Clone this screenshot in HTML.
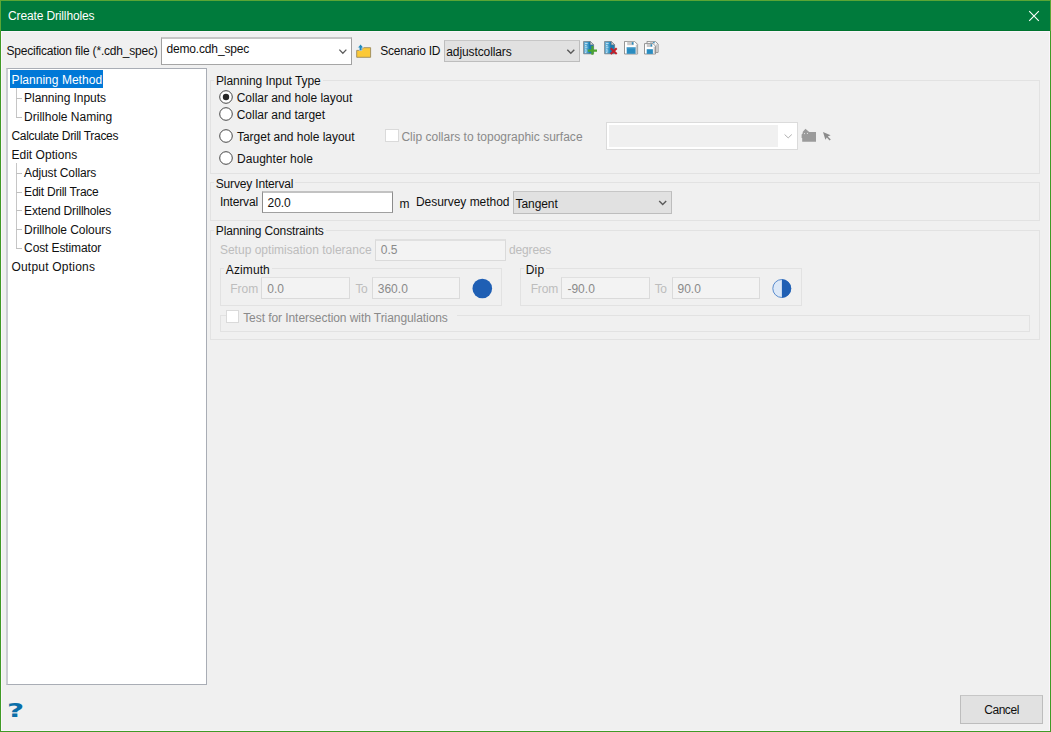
<!DOCTYPE html>
<html><head><meta charset="utf-8"><title>Create Drillholes</title>
<style>
html,body{margin:0;padding:0}
body{width:1051px;height:732px;overflow:hidden;position:relative;background:#f0f0f0;font-family:'Liberation Sans', sans-serif;font-size:12px}
.b{position:absolute;display:block}
.q{position:absolute;white-space:pre}
.t{position:absolute;white-space:pre;font-family:'Liberation Sans', sans-serif;font-size:12px;line-height:14px}
</style></head><body>
<div class="b" style="left:0px;top:0px;width:1051px;height:732px;background:#409a26"></div>
<div class="b" style="left:0px;top:0px;width:1051px;height:31px;background:#5aa635"></div>
<div class="b" style="left:1px;top:1px;width:1049px;height:30px;background:#007b3c"></div>
<div class="b" style="left:1px;top:30px;width:1049px;height:1px;background:#00742f"></div>
<div class="b" style="left:1px;top:31px;width:1049px;height:700px;background:#fbf5fb"></div>
<div class="b" style="left:2px;top:32px;width:1047px;height:698px;background:#f0f0f0"></div>
<svg class="b" style="left:1027px;top:9px" width="14" height="14" viewBox="0 0 14 14"><path d="M2.2 2.2 L11.8 11.8 M11.8 2.2 L2.2 11.8" stroke="#fff" stroke-width="1.1" fill="none"/></svg>
<div class="b" style="left:161px;top:37px;width:191px;height:28px;background:#fff;border:1px solid #a0a0a0;border-top:2px solid #c6c6c6;border-bottom-color:#a6a6a6;box-sizing:border-box"></div>
<svg class="b" style="left:337px;top:47px" width="12" height="10" viewBox="0 0 12 10"><path d="M2.35 2.6 L5.85 6.2 L9.35 2.6" stroke="#5c5c5c" stroke-width="1.3" fill="none"/></svg>
<svg class="b" style="left:355px;top:43px" width="17" height="16" viewBox="0 0 17 16">
<path d="M1.7 7.4 L6.6 7.4 L8.2 4.7 L15.6 4.7 L15.6 14.3 L1.7 14.3 Z" fill="#fcc937" stroke="#9a8a5c" stroke-width="0.9" stroke-linejoin="round"/>
<path d="M5.6 1.3 L8.5 4.7 L6.9 4.7 L6.9 7.6 L4.3 7.6 L4.3 4.7 L2.7 4.7 Z" fill="#1e88bb" stroke="#f4f4f4" stroke-width="0.5"/>
</svg>
<div class="b" style="left:444px;top:40px;width:136px;height:22px;background:#e1e1e1;border:1px solid #bdbdbd;border-top-color:#c6c6c6;box-sizing:border-box"></div>
<svg class="b" style="left:565px;top:47px" width="12" height="10" viewBox="0 0 12 10"><path d="M2.3 2.7 L5.8 6.3 L9.3 2.7" stroke="#5a5a5a" stroke-width="1.4" fill="none"/></svg>
<svg class="b" style="left:583px;top:41px" width="15" height="15" viewBox="0 0 15 15"><defs><linearGradient id="dg1" x1="0" x2="1" y1="0" y2="0"><stop offset="0" stop-color="#6cb4da"/><stop offset="0.45" stop-color="#3c98c8"/><stop offset="0.6" stop-color="#1b7bb0"/><stop offset="1" stop-color="#1b7bb0"/></linearGradient></defs>
<path d="M0.6 0.4 L7.4 0.4 L10.6 3.8 L10.6 12.8 L0.6 12.8 Z" fill="url(#dg1)" stroke="#6a7076" stroke-width="0.7"/>
<path d="M7.4 0.6 L7.4 3.8 L10.4 3.8 Z" fill="#e4e4e4" stroke="#777" stroke-width="0.5"/>
<path d="M2 2.4h2.6M2 4.4h1.6M2 6.2h2.4M2 8.2h1.6M2 10h2.2M2 11.6h1.4" stroke="#d4eaf6" stroke-width="0.9"/>

<path d="M9.4 5 V13.8 M4.9 9.6 H14" stroke="#4ca52e" stroke-width="2.1"/>
</svg>
<svg class="b" style="left:604px;top:41px" width="15" height="15" viewBox="0 0 15 15"><defs><linearGradient id="dg2" x1="0" x2="1" y1="0" y2="0"><stop offset="0" stop-color="#6cb4da"/><stop offset="0.45" stop-color="#3c98c8"/><stop offset="0.6" stop-color="#1b7bb0"/><stop offset="1" stop-color="#1b7bb0"/></linearGradient></defs>
<path d="M0.6 0.4 L7.4 0.4 L10.6 3.8 L10.6 12.8 L0.6 12.8 Z" fill="url(#dg2)" stroke="#6a7076" stroke-width="0.7"/>
<path d="M7.4 0.6 L7.4 3.8 L10.4 3.8 Z" fill="#e4e4e4" stroke="#777" stroke-width="0.5"/>
<path d="M2 2.4h2.6M2 4.4h1.6M2 6.2h2.4M2 8.2h1.6M2 10h2.2M2 11.6h1.4" stroke="#d4eaf6" stroke-width="0.9"/>

<path d="M6.7 7.2 L12.7 13 M12.7 7.2 L6.7 13" stroke="#c2202a" stroke-width="2"/>
</svg>
<svg class="b" style="left:624px;top:41px" width="15" height="15" viewBox="0 0 15 15">
<path d="M0.5 0.4 L10.6 0.4 L13.6 3.4 L13.6 13 L0.5 13 Z" fill="#fff" stroke="#8a8a8a" stroke-width="0.9"/>
<rect x="3.2" y="0.8" width="6.6" height="3.4" fill="#c9c9c9"/><rect x="7.8" y="1.2" width="1.6" height="2.4" fill="#2a8cc0"/>
<rect x="2.7" y="6.4" width="9" height="6.4" fill="#2a8cc0"/><rect x="2.7" y="6.4" width="9" height="1" fill="#55a6d0"/>
<rect x="11.8" y="3.6" width="1.5" height="9.2" fill="#c8c8c8"/>
</svg>
<svg class="b" style="left:644px;top:41px" width="16" height="15" viewBox="0 0 16 15">
<path d="M3 0.4 L11.4 0.4 L14.1 3 L14.1 11.4 L3 11.4 Z" fill="#f4f4f4" stroke="#8a8a8a" stroke-width="0.9"/>
<rect x="6" y="0.8" width="4.6" height="1.6" fill="#c9c9c9"/><rect x="9.2" y="0.9" width="1.3" height="1.4" fill="#2a8cc0"/>
<rect x="12" y="3.4" width="1.6" height="7.6" fill="#c8c8c8"/>
<path d="M0.5 2.6 L9 2.6 L11.5 5.1 L11.5 13 L0.5 13 Z" fill="#fff" stroke="#8a8a8a" stroke-width="0.9"/>
<rect x="2.8" y="3" width="5.6" height="3" fill="#c9c9c9"/><rect x="6.6" y="3.3" width="1.5" height="2.2" fill="#2a8cc0"/>
<rect x="2.7" y="8.2" width="6.2" height="4.7" fill="#2a8cc0"/>
<rect x="9.6" y="5.6" width="1.4" height="7" fill="#c8c8c8"/>
</svg>
<div class="b" style="left:6px;top:68px;width:201px;height:617px;background:#fff;border:1px solid #a9adb5;border-left:2px solid #cbcdd2;box-sizing:border-box"></div>
<div class="b" style="left:10px;top:70px;width:93px;height:18px;background:#0078d7"></div>
<div class="b" style="left:16px;top:88px;width:1px;height:29px;background:#c6c6c6"></div>
<div class="b" style="left:16px;top:98px;width:6px;height:1px;background:#c0c0c0"></div>
<div class="b" style="left:16px;top:117px;width:6px;height:1px;background:#c0c0c0"></div>
<div class="b" style="left:16px;top:163px;width:1px;height:85px;background:#c6c6c6"></div>
<div class="b" style="left:16px;top:173px;width:6px;height:1px;background:#c0c0c0"></div>
<div class="b" style="left:16px;top:192px;width:6px;height:1px;background:#c0c0c0"></div>
<div class="b" style="left:16px;top:210px;width:6px;height:1px;background:#c0c0c0"></div>
<div class="b" style="left:16px;top:229px;width:6px;height:1px;background:#c0c0c0"></div>
<div class="b" style="left:16px;top:248px;width:6px;height:1px;background:#c0c0c0"></div>
<div class="b" style="left:210px;top:80px;width:830px;height:94px;border:1px solid #e2e2e2;box-sizing:border-box"></div><div class="b" style="left:214px;top:80px;width:109px;height:1px;background:#f0f0f0"></div>
<div class="b" style="left:210px;top:182px;width:830px;height:39px;border:1px solid #e2e2e2;box-sizing:border-box"></div><div class="b" style="left:214px;top:182px;width:81px;height:1px;background:#f0f0f0"></div>
<div class="b" style="left:210px;top:230px;width:830px;height:110px;border:1px solid #e2e2e2;box-sizing:border-box"></div><div class="b" style="left:214px;top:230px;width:112px;height:1px;background:#f0f0f0"></div>
<div class="b" style="left:220px;top:268px;width:282px;height:38px;border:1px solid #e2e2e2;box-sizing:border-box"></div><div class="b" style="left:224px;top:268px;width:48px;height:1px;background:#f0f0f0"></div>
<div class="b" style="left:520px;top:268px;width:282px;height:38px;border:1px solid #e2e2e2;box-sizing:border-box"></div><div class="b" style="left:524px;top:268px;width:22px;height:1px;background:#f0f0f0"></div>
<div class="b" style="left:220px;top:315px;width:810px;height:17px;border:1px solid #e2e2e2;box-sizing:border-box"></div><div class="b" style="left:226px;top:315px;width:231px;height:1px;background:#f0f0f0"></div>
<svg class="b" style="left:218.25px;top:89.3px" width="16" height="16" viewBox="0 0 16 16"><circle cx="8" cy="8" r="6.3" fill="#fff" stroke="#333" stroke-width="0.9"/><circle cx="8" cy="8" r="3.2" fill="#262626"/></svg>
<svg class="b" style="left:218.25px;top:106.0px" width="16" height="16" viewBox="0 0 16 16"><circle cx="8" cy="8" r="6.3" fill="#fff" stroke="#333" stroke-width="0.9"/></svg>
<svg class="b" style="left:218.25px;top:128.0px" width="16" height="16" viewBox="0 0 16 16"><circle cx="8" cy="8" r="6.3" fill="#fff" stroke="#333" stroke-width="0.9"/></svg>
<svg class="b" style="left:218.25px;top:149.8px" width="16" height="16" viewBox="0 0 16 16"><circle cx="8" cy="8" r="6.3" fill="#fff" stroke="#333" stroke-width="0.9"/></svg>
<div class="b" style="left:385px;top:129px;width:14px;height:13px;background:#fff;border:1px solid #dadada;box-sizing:border-box"></div>
<div class="b" style="left:226px;top:310px;width:13px;height:13px;background:#fff;border:1px solid #dadada;box-sizing:border-box"></div>
<div class="b" style="left:606px;top:122px;width:192px;height:28px;background:#fff;border:1px solid #dbdbdb;box-sizing:border-box"></div>
<div class="b" style="left:609px;top:125px;width:169px;height:22px;background:#f0f0f0"></div>
<svg class="b" style="left:782px;top:131px" width="12" height="10" viewBox="0 0 12 10"><path d="M2.6 3.5 L6.2 6.9 L9.8 3.5" stroke="#b0b0b0" stroke-width="1" fill="none"/></svg>
<svg class="b" style="left:801px;top:128px" width="17" height="16" viewBox="0 0 17 16">
<path d="M0.6 6.6 L1.6 5.4 L1.8 3.8 L4.5 0.7 L7.6 3.6 L8.4 4.1 L15 4.1 L15 13.7 L1.2 13.7 L1.2 10 L0.6 10 Z" fill="#9b9b9b"/><circle cx="3.5" cy="5.6" r="0.55" fill="#e4e4e4"/><circle cx="6.4" cy="5.4" r="0.55" fill="#e4e4e4"/></svg>
<svg class="b" style="left:822px;top:130.5px" width="11" height="11" viewBox="0 0 11 11">
<path d="M1 1 L8.6 4.2 L5.8 5.4 L8.8 8.6 L7.6 9.6 L4.8 6.4 L3.4 8.8 Z" fill="#8c8c8c"/></svg>
<div class="b" style="left:262px;top:191px;width:131px;height:22px;background:#fff;border:1px solid #8c8c8c;border-top:2px solid #c2c2c2;border-bottom-color:#a0a0a0;box-sizing:border-box"></div>
<div class="b" style="left:513px;top:191px;width:159px;height:23px;background:#e1e1e1;border:1px solid #bdbdbd;border-top-color:#c6c6c6;box-sizing:border-box"></div>
<svg class="b" style="left:657px;top:198px" width="12" height="10" viewBox="0 0 12 10"><path d="M2.2 3 L5.7 6.6 L9.2 3" stroke="#5a5a5a" stroke-width="1.4" fill="none"/></svg>
<div class="b" style="left:375px;top:239px;width:131px;height:22px;background:#f3f3f3;border:1px solid #dadada;border-top-color:#e0e0e0;box-sizing:border-box;border-top-width:2px"></div>
<div class="b" style="left:261px;top:277px;width:89px;height:22px;background:#f3f3f3;border:1px solid #dadada;border-top-color:#e0e0e0;box-sizing:border-box"></div>
<div class="b" style="left:372px;top:277px;width:88px;height:22px;background:#f3f3f3;border:1px solid #dadada;border-top-color:#e0e0e0;box-sizing:border-box"></div>
<div class="b" style="left:561px;top:277px;width:89px;height:22px;background:#f3f3f3;border:1px solid #dadada;border-top-color:#e0e0e0;box-sizing:border-box"></div>
<div class="b" style="left:672px;top:277px;width:88px;height:22px;background:#f3f3f3;border:1px solid #dadada;border-top-color:#e0e0e0;box-sizing:border-box"></div>
<svg class="b" style="left:471px;top:277px" width="23" height="23" viewBox="0 0 23 23"><circle cx="11.3" cy="11.5" r="9.8" fill="#1f5fb4"/></svg>
<svg class="b" style="left:771px;top:277px" width="23" height="23" viewBox="0 0 23 23"><circle cx="10.8" cy="11.5" r="9" fill="#dce8f7" stroke="#4a80c8" stroke-width="0.9"/><path d="M10.9 2.2 A9.3 9.3 0 0 1 10.9 20.8 Z" fill="#2060b4"/></svg>
<div class="b" style="left:960px;top:695px;width:83px;height:29px;background:#e1e1e1;border:1px solid #bdbdbd;border-top-color:#c6c6c6;box-sizing:border-box"></div>
<span class="q" style="left:7px;top:696px;color:#0a6ea8;font-family:'DejaVu Sans',sans-serif;font-size:20px;font-weight:bold;line-height:28px;transform-origin:0 0;transform:scaleX(1.48)">?</span>
<span class="t" style="left:8.0px;top:9px;color:#ffffff;letter-spacing:-0.135px">Create Drillholes</span>
<span class="t" style="left:6.4px;top:44px;color:#101010;letter-spacing:-0.201px">Specification file (*.cdh_spec)</span>
<span class="t" style="left:166.4px;top:42px;color:#101010;letter-spacing:-0.149px">demo.cdh_spec</span>
<span class="t" style="left:380.3px;top:44px;color:#101010;letter-spacing:-0.246px">Scenario ID</span>
<span class="t" style="left:446.3px;top:45px;color:#101010;letter-spacing:-0.108px">adjustcollars</span>
<span class="t" style="left:11.6px;top:73px;color:#ffffff;letter-spacing:0.028px">Planning Method</span>
<span class="t" style="left:24.1px;top:91px;color:#101010;letter-spacing:-0.062px">Planning Inputs</span>
<span class="t" style="left:24.1px;top:110px;color:#101010;letter-spacing:0.004px">Drillhole Naming</span>
<span class="t" style="left:11.4px;top:129px;color:#101010;letter-spacing:-0.299px">Calculate Drill Traces</span>
<span class="t" style="left:11.4px;top:148px;color:#101010;letter-spacing:0.035px">Edit Options</span>
<span class="t" style="left:24.1px;top:166px;color:#101010;letter-spacing:-0.138px">Adjust Collars</span>
<span class="t" style="left:24.1px;top:185px;color:#101010;letter-spacing:-0.221px">Edit Drill Trace</span>
<span class="t" style="left:24.1px;top:204px;color:#101010;letter-spacing:-0.173px">Extend Drillholes</span>
<span class="t" style="left:24.1px;top:223px;color:#101010;letter-spacing:-0.055px">Drillhole Colours</span>
<span class="t" style="left:24.1px;top:241px;color:#101010;letter-spacing:-0.113px">Cost Estimator</span>
<span class="t" style="left:11.4px;top:260px;color:#101010;letter-spacing:0.220px">Output Options</span>
<span class="t" style="left:215.9px;top:74px;color:#101010;letter-spacing:-0.057px">Planning Input Type</span>
<span class="t" style="left:236.7px;top:91px;color:#101010;letter-spacing:-0.022px">Collar and hole layout</span>
<span class="t" style="left:236.7px;top:108px;color:#101010;letter-spacing:-0.019px">Collar and target</span>
<span class="t" style="left:237.0px;top:130px;color:#101010;letter-spacing:-0.027px">Target and hole layout</span>
<span class="t" style="left:237.0px;top:152px;color:#101010;letter-spacing:0.039px">Daughter hole</span>
<span class="t" style="left:401.4px;top:130px;color:#8a8a8a;letter-spacing:0.012px">Clip collars to topographic surface</span>
<span class="t" style="left:215.8px;top:177px;color:#101010;letter-spacing:-0.176px">Survey Interval</span>
<span class="t" style="left:219.9px;top:195px;color:#101010;letter-spacing:-0.157px">Interval</span>
<span class="t" style="left:267.6px;top:196px;color:#101010;letter-spacing:-0.115px">20.0</span>
<span class="t" style="left:399.4px;top:197px;color:#101010;letter-spacing:0.500px">m</span>
<span class="t" style="left:415.9px;top:195px;color:#101010;letter-spacing:-0.030px">Desurvey method</span>
<span class="t" style="left:515.6px;top:197px;color:#101010;letter-spacing:-0.086px">Tangent</span>
<span class="t" style="left:215.8px;top:224px;color:#101010;letter-spacing:-0.142px">Planning Constraints</span>
<span class="t" style="left:219.9px;top:243px;color:#bdbdbd;letter-spacing:0.013px">Setup optimisation tolerance</span>
<span class="t" style="left:380.8px;top:243px;color:#8a8a8a;letter-spacing:0.004px">0.5</span>
<span class="t" style="left:509.1px;top:243px;color:#bdbdbd;letter-spacing:-0.182px">degrees</span>
<span class="t" style="left:225.8px;top:263px;color:#101010;letter-spacing:0.106px">Azimuth</span>
<span class="t" style="left:230.3px;top:282px;color:#bdbdbd;letter-spacing:-0.050px">From</span>
<span class="t" style="left:267.2px;top:282px;color:#8a8a8a;letter-spacing:0.071px">0.0</span>
<span class="t" style="left:355.4px;top:282px;color:#bdbdbd;letter-spacing:-0.294px">To</span>
<span class="t" style="left:377.7px;top:282px;color:#8a8a8a;letter-spacing:0.034px">360.0</span>
<span class="t" style="left:525.8px;top:263px;color:#101010;letter-spacing:0.128px">Dip</span>
<span class="t" style="left:530.7px;top:282px;color:#bdbdbd;letter-spacing:-0.150px">From</span>
<span class="t" style="left:567.4px;top:282px;color:#8a8a8a;letter-spacing:0.028px">-90.0</span>
<span class="t" style="left:654.7px;top:282px;color:#bdbdbd;letter-spacing:-0.344px">To</span>
<span class="t" style="left:677.5px;top:282px;color:#8a8a8a;letter-spacing:0.010px">90.0</span>
<span class="t" style="left:243.2px;top:311px;color:#8a8a8a;letter-spacing:-0.069px">Test for Intersection with Triangulations</span>
<span class="t" style="left:984.2px;top:703px;color:#101010;letter-spacing:-0.443px">Cancel</span>
</body></html>
